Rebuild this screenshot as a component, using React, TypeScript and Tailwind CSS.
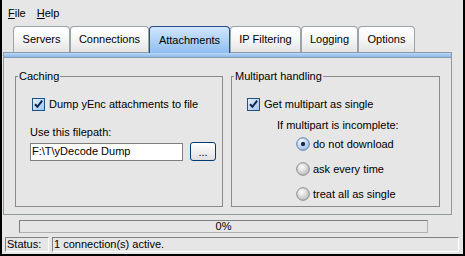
import React from 'react';

const tabs = ['Servers', 'Connections', 'Attachments', 'IP Filtering', 'Logging', 'Options'];
const tabWidths: Record<string, string> = {
  Servers: 'w-[57px]',
  Connections: 'w-[79px]',
  Attachments: 'w-[81px]',
  'IP Filtering': 'w-[71px]',
  Logging: 'w-[57px]',
  Options: 'w-[57px]',
};

function CheckBox() {
  return (
    <svg width="13" height="13" viewBox="0 0 13 13" className="shrink-0">
      <defs>
        <linearGradient id="cbg" x1="0" y1="0" x2="1" y2="1">
          <stop offset="0" stopColor="#e8f1fb" />
          <stop offset="1" stopColor="#9fc3ea" />
        </linearGradient>
      </defs>
      <rect x="0.5" y="0.5" width="12" height="12" fill="url(#cbg)" stroke="#1c5180" />
      <path d="M3 6.2 L5.4 8.8 L10.2 2.6" stroke="#0f2658" strokeWidth="2" fill="none" />
    </svg>
  );
}

function Radio({ checked }: { checked?: boolean }) {
  return (
    <svg width="14" height="14" viewBox="0 0 14 14" className="shrink-0">
      <defs>
        <radialGradient id={checked ? 'rb1' : 'rb0'} cx="0.4" cy="0.35" r="0.7">
          <stop offset="0" stopColor="#ffffff" />
          <stop offset="1" stopColor={checked ? '#8fb6e6' : '#b8b8b8'} />
        </radialGradient>
      </defs>
      <circle cx="7" cy="7" r="6.3" fill={`url(#${checked ? 'rb1' : 'rb0'})`} stroke={checked ? '#5f7fa8' : '#8a8a8a'} />
      {checked && <circle cx="7" cy="7" r="2.2" fill="#1a2e55" />}
    </svg>
  );
}

export default function App() {
  return (
    <div className="w-[465px] h-[256px] bg-[#e6e6e6] border-l-2 border-r-2 border-b-2 border-black font-['Liberation_Sans',Arial,sans-serif] text-[11px] leading-[13px] text-black flex flex-col overflow-hidden">
      {/* Menu */}
      <div className="h-[26px] flex items-center gap-[11px] pl-[6px]">
        <span><span className="underline">F</span>ile</span>
        <span><span className="underline">H</span>elp</span>
      </div>

      {/* Tabs */}
      <div className="h-[26px] flex items-end pl-[11px]">
        {tabs.map((t) =>
          t === 'Attachments' ? (
            <div
              key={t}
              className={`${tabWidths[t]} h-[27px] -mb-[1px] relative z-10 flex items-center justify-center rounded-t-[4px] border border-b-0 border-[#2a4d8c] bg-gradient-to-b from-[#d2e6fc] to-[#8fbdf2]`}
            >
              {t}
            </div>
          ) : (
            <div
              key={t}
              className={`${tabWidths[t]} h-[26px] flex items-center justify-center rounded-t-[4px] border border-b-0 border-[#9aa3a8] bg-gradient-to-b from-white via-[#f6f6f6] to-[#e4e4e4]`}
            >
              {t}
            </div>
          )
        )}
      </div>

      {/* Panel */}
      <div className="ml-[1px] w-[449px] h-[163px] border-l border-r border-b border-[#919b9c] flex flex-col">
        <div className="h-[6px] border-t border-b border-[#8a9ba8] bg-gradient-to-b from-[#bcd8f6] via-[#a2c8f0] to-[#8cb9ec]" />
        <div className="flex gap-[8px] pl-[11px] pt-[12px]">
          {/* Caching */}
          <fieldset className="w-[208px] h-[137px] border border-[#8a8a8a]">
            <legend className="ml-[2px] px-[1px]">Caching</legend>
            <div className="pl-[16px] flex flex-col">
              <div className="mt-[15px] h-[13px] flex items-center gap-[4px]">
                <CheckBox />
                <span>Dump yEnc attachments to file</span>
              </div>
              <div className="mt-[15px] -ml-[2px]">Use this filepath:</div>
              <div className="mt-[3px] -ml-[2px] flex items-center gap-[7px]">
                <div className="w-[153px] h-[18px] bg-white border border-[#7f7f7f] pl-[1px] flex items-center">
                  F:\T\yDecode Dump
                </div>
                <div className="w-[26px] h-[19px] rounded-[3px] border border-[#003c74] bg-gradient-to-b from-white to-[#e0e0e0] flex items-center justify-center pt-[2px]">
                  ...
                </div>
              </div>
            </div>
          </fieldset>

          {/* Multipart handling */}
          <fieldset className="w-[209px] h-[137px] border border-[#8a8a8a]">
            <legend className="ml-[2px] px-[1px]">Multipart handling</legend>
            <div className="pl-[15px] flex flex-col">
              <div className="mt-[15px] h-[13px] flex items-center gap-[4px]">
                <CheckBox />
                <span>Get multipart as single</span>
              </div>
              <div className="mt-[8px] ml-[30px]">If multipart is incomplete:</div>
              <div className="mt-[5px] ml-[49px] flex flex-col gap-[11px]">
                <div className="h-[14px] flex items-center gap-[3px]">
                  <Radio checked />
                  <span>do not download</span>
                </div>
                <div className="h-[14px] flex items-center gap-[3px]">
                  <Radio />
                  <span>ask every time</span>
                </div>
                <div className="h-[14px] flex items-center gap-[3px]">
                  <Radio />
                  <span>treat all as single</span>
                </div>
              </div>
            </div>
          </fieldset>
        </div>
      </div>

      {/* Progress */}
      <div className="mt-[5px] ml-[17px] w-[409px] h-[13px] border border-t-[#808080] border-l-[#808080] border-b-[#b0b0b0] border-r-[#b0b0b0] flex items-center justify-center leading-[11px]">
        0%
      </div>

      {/* Status bar */}
      <div className="mt-[4px] ml-[3px] flex gap-[3px] h-[15px]">
        <div className="w-[44px] border border-t-[#808080] border-l-[#808080] border-b-white border-r-white pl-[1px] flex items-center">
          Status:
        </div>
        <div className="w-[407px] border border-t-[#808080] border-l-[#808080] border-b-white border-r-white pl-[1px] flex items-center">
          1 connection(s) active.
        </div>
      </div>
    </div>
  );
}
